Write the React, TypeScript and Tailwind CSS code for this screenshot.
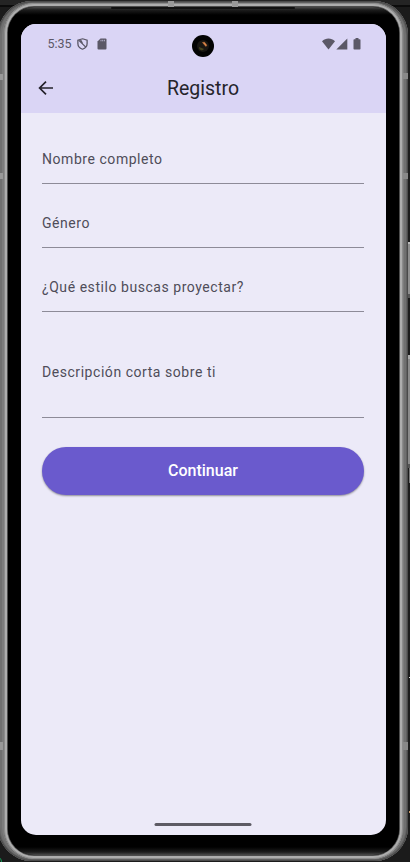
import React from "react";

function Field({ label, className }: { label: string; className: string }) {
  return (
    <div className={`flex border-b border-[#8d8b98] text-[14px] leading-[20px] tracking-[0.55px] text-[#4f4d59] ${className}`}>
      <span className="whitespace-nowrap">{label}</span>
    </div>
  );
}

function StatusBar() {
  return (
    <div className="relative flex h-[40px] items-center justify-between pl-[26.5px] pr-[25px] text-[#5b5867]">
      <div className="flex items-center">
        <span className="w-[29px] text-[12.5px] leading-none">5:35</span>
        <svg width="11" height="12" viewBox="0 0 10 12" preserveAspectRatio="none" fill="none" stroke="currentColor" strokeWidth="1.2">
          <path d="M5 .8 9.2 2.2v3.3c0 2.6-1.8 4.8-4.2 5.7C2.600 10.300.8 8.100.8 5.500V2.200z" />
          <path d="M1.500 2.200 8 9.200M3.200 1.700 5 5.500" />
        </svg>
        <svg className="ml-[9px]" width="10" height="12" viewBox="0 0 10 12" fill="currentColor">
          <path d="M3.500.5H8.500a1 1 0 0 1 1 1v9a1 1 0 0 1-1 1h-7a1 1 0 0 1-1-1V3.500z" />
          <path d="M4 1.800v1.500M5.700 1.800v1.500M7.400 1.800v1.500" stroke="#dad5f5" strokeWidth=".7" />
        </svg>
      </div>
      <div className="flex items-center">
        <svg width="13" height="12" viewBox="0 0 14 12" preserveAspectRatio="none" fill="currentColor">
          <path d="M0 3.200C4-.5 10-.5 14 3.200L7 11.500z" />
        </svg>
        <svg className="ml-[1px]" width="12" height="12" viewBox="0 0 12 12" fill="currentColor">
          <path d="M11.300.500v11H.300z" />
        </svg>
        <svg className="ml-[5px]" width="8" height="12" viewBox="0 0 8 12" fill="currentColor">
          <path d="M2.500 0h3v1.200H6.700a.8.8 0 0 1 .8.8v8.700a.8.8 0 0 1-.8.8H1.300a.8.8 0 0 1-.8-.8V2a.8.8 0 0 1 .8-.8h1.200z" />
        </svg>
      </div>
      <svg className="absolute left-[171px] top-[11px]" width="22" height="22" viewBox="0 0 22 22">
        <circle cx="11" cy="11" r="11" fill="#030303" />
        <circle cx="11" cy="11" r="6" fill="#191713" />
        <path d="m10.500 7.500 2-.3 2.300 3-.9 1.200-1.700-1.900z" fill="#e08a4c" stroke="#c9773d" strokeWidth=".5" />
        <path d="m7 12 2 .8 3.200 1.200-2.200 1.500-2.500-1z" fill="#44431d" />
      </svg>
    </div>
  );
}

export default function App() {
  return (
    <div className="relative h-[862px] w-[410px] overflow-hidden bg-[linear-gradient(#242424_0_5px,#0b0b0b_5px_7px,#1b1b1b_7px)] font-['Roboto',sans-serif]">
      <div className="absolute right-0 top-[242px] h-[56px] w-[3px] border-b-4 border-t-2 border-b-[#555] border-t-[#bbb] bg-[#8e8e8e]" />
      <div className="absolute right-0 top-[355px] h-[113px] w-[3px] border-b-4 border-t-4 border-b-[#555] border-t-[#aaa] bg-[#8b8b8b]" />
      <div className="absolute right-0 top-[468px] h-[15px] w-px bg-[#777]" />
      <div className="absolute right-0 top-[677px] h-px w-px bg-[#ddd]" />
      <div className="absolute right-0 top-[811px] h-[2px] w-px bg-[#c99a67]" />
      <div className="absolute -left-[10px] top-[856px] size-[12px] rounded-full border border-[#12a25a]" />

      <div className="relative ml-[-2px] mt-px flex h-[860px] w-[410px] rounded-[34px] bg-[#555] shadow-[inset_0_0_0_1px_#4a4a4a,inset_0_0_0_2px_#606060,inset_0_0_0_4px_#707070,inset_0_0_0_6px_#7c7c7c]">
        <div className="mb-[2px] ml-[6px] mr-[5px] mt-[2px] flex flex-1 rounded-[30px] bg-black shadow-[inset_0_0_0_1px_#8c8c8c,inset_0_0_0_3px_#adadad,inset_0_0_0_4px_#4c4c4c]">
          <div className="mx-[4px] my-[4px] flex flex-1 flex-col rounded-[26px] bg-[linear-gradient(#4a4a4a,#1c1c1c_3px,#000_8px,#000_calc(100%-8px),#1c1c1c_calc(100%-3px),#4a4a4a)] px-[13px] pb-[20px] pt-[17px]">
            <main className="flex flex-1 flex-col overflow-hidden rounded-[15px] bg-[#eceaf8]">
              <header className="h-[89px] bg-[#dad5f5]">
                <StatusBar />
                <div className="grid h-[49px] grid-cols-[48px_1fr_49px] items-center">
                  <svg className="-mt-px ml-[17px]" width="16" height="16" viewBox="0 0 16 16" fill="none" stroke="#25232b" strokeWidth="1.7">
                    <path d="M8 1.700 1.600 8 8 14.300M1.800 8H15" />
                  </svg>
                  <h1 className="text-center text-[19.5px] font-normal text-[#25242b]">Registro</h1>
                </div>
              </header>
              <form className="flex flex-col pl-[21px] pr-[22px]">
                <Field label="Nombre completo" className="h-[71px] pt-[36px]" />
                <Field label="Género" className="h-[64px] pt-[29px]" />
                <Field label="¿Qué estilo buscas proyectar?" className="h-[64px] pt-[29px]" />
                <Field label="Descripción corta sobre ti" className="h-[106px] pt-[50px]" />
                <button type="button" className="mt-[29px] h-[47.500px] rounded-full bg-[#6a5acd] text-[16px] font-medium text-white shadow-[0_1px_2px_rgba(0,0,0,0.4)]">
                  Continuar
                </button>
              </form>
              <div className="mx-auto mb-[9px] mt-auto h-[3px] w-[97px] -translate-x-[0.5px] rounded-full bg-[#5d5b64]" />
            </main>
          </div>
        </div>
        <i className="absolute left-[2px] top-[73px] h-[6px] w-[3px] bg-[#999]" />
        <i className="absolute left-[2px] top-[172px] h-[6px] w-[3px] bg-[#999]" />
        <i className="absolute left-[2px] top-[741px] h-[8px] w-[3px] bg-[#999]" />
        <i className="absolute right-0 top-[72px] h-[6px] w-[5px] bg-[#888]" />
        <i className="absolute right-0 top-[172px] h-[6px] w-[5px] bg-[#888]" />
        <i className="absolute right-0 top-[741px] h-[8px] w-[5px] bg-[#888]" />
        <i className="absolute left-[170px] top-0 h-[6px] w-[6px] bg-[#999]" />
        <i className="absolute left-[234px] top-0 h-[6px] w-[6px] bg-[#999]" />
        <i className="absolute left-[113px] top-[6px] h-[2px] w-[184px] rounded-full bg-[#111]" />
      </div>
    </div>
  );
}
